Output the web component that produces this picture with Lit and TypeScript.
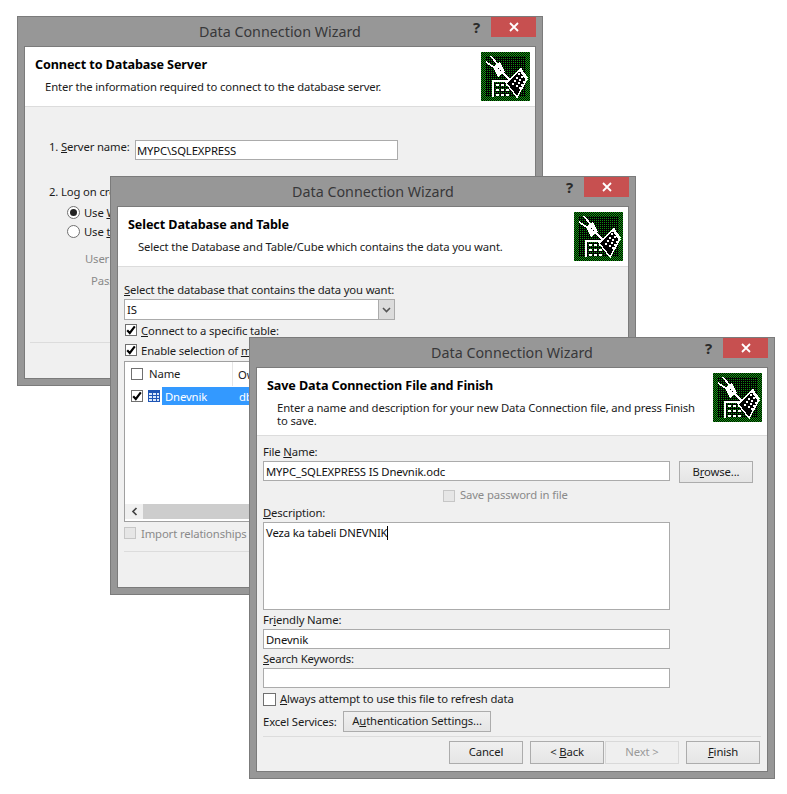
import { LitElement, html, css, svg } from "lit";
import { customElement } from "lit/decorators.js";

const dots: [number, number][] = [];
for (let a = 0; a < 4; a++) for (let b = 0; b < 3; b++) {
  dots.push([31 + a * 1.9 + b * 3.6, 31 - a * 3.2 + b * 2.2]);
}

const icon = () => html`<svg class="icon" viewBox="0 0 49 49" width="49" height="49" shape-rendering="crispEdges">
  <defs>
    <pattern id="chk" width="2" height="2" patternUnits="userSpaceOnUse">
      <rect width="2" height="2" fill="#000"></rect>
      <rect width="1" height="1" fill="#12a012"></rect>
      <rect x="1" y="1" width="1" height="1" fill="#12a012"></rect>
    </pattern>
    <pattern id="dot" width="2" height="2" patternUnits="userSpaceOnUse">
      <rect width="2" height="2" fill="#000"></rect>
      <rect width="1" height="1" fill="#0f8a0f"></rect>
    </pattern>
  </defs>
  <rect width="49" height="49" fill="url(#chk)"></rect>
  <rect x="5" y="4" width="40" height="41" fill="url(#dot)"></rect>
  <g fill="none" stroke="#fff" stroke-width="1.6">
    <path d="M5 10L14 16"></path><path d="M10 4L17 13"></path>
    <path d="M22 21L29 28" stroke-width="1.8"></path>
  </g>
  <path d="M12 15L19 10L24 20L17 25Z" fill="#fff"></path>
  <rect x="17" y="16" width="1" height="1" fill="#000"></rect>
  <rect x="19" y="18" width="1" height="1" fill="#000"></rect>
  <path d="M11 28H27V30H13V45H11Z" fill="#fff"></path>
  ${[32, 37, 42].map((y) => [15, 20, 25].map((x) => svg`<rect x=${x} y=${y} width="3" height="2" fill="#fff"></rect>`))}
  <path d="M40 17L46 27L36 45L25 31Z" fill="#000" stroke="#fff" stroke-width="1.4"></path>
  <path d="M36 20L40 16L47 26L44 27L39.5 20Z" fill="#fff"></path>
  ${dots.map(([x, y]) => svg`<rect x=${x} y=${y} width="2" height="2" fill="#fff"></rect>`)}
</svg>`;

const tick = () => html`<svg class="tick" viewBox="0 0 12 12" width="12" height="12"><path d="M2.2 6.2L4.8 9L9.8 2.4" fill="none" stroke="#000" stroke-width="2.1"></path></svg>`;

const shell = (cls: string, heading: string, sub: unknown, body: unknown) => html`
  <section class="win ${cls}">
    <header class="bar">
      <span class="title">Data Connection Wizard</span>
      <span class="help">?</span>
      <span class="close"><svg viewBox="0 0 10 10" width="10" height="10"><path d="M1 1L9 9M9 1L1 9" stroke="#fff" stroke-width="1.8"></path></svg></span>
    </header>
    <div class="client">
      <div class="head">
        <div class="head-text">
          <h2>${heading}</h2>
          <p>${sub}</p>
        </div>
        ${icon()}
      </div>
      <div class="body">${body}</div>
    </div>
  </section>`;

@customElement("app-root")
export class AppRoot extends LitElement {
  static styles = css`
    :host { display: block; position: relative; width: 787px; height: 794px; background: #fff; overflow: hidden;
      font: 11.3px/13px "Noto Sans", sans-serif; color: #1c1c1c; letter-spacing: -0.14px; }
    .win { position: absolute; box-sizing: border-box; width: 526px; background: #979797; border: 1px solid #7b7b7b;
      padding: 0 6px 6px; display: flex; flex-direction: column; }
    .w1 { left: 17px; top: 16px; height: 370px; }
    .w2 { left: 110px; top: 176px; height: 419px; }
    .w3 { left: 249px; top: 337px; height: 442px; }
    .bar { height: 29px; flex: none; position: relative; display: flex; justify-content: center; align-items: center; box-sizing: border-box; }
    .title { font-size: 14.3px; line-height: 20px; color: #38383a; letter-spacing: 0; }
    .help { position: absolute; right: 56px; top: 0; font: bold 15px/20px "Noto Sans", sans-serif; color: #2b2b2b; }
    .close { position: absolute; right: 0; top: 0; width: 45px; height: 20px; background: #c75050; display: flex; align-items: center; justify-content: center; }
    .client { flex: 1; min-height: 0; border: 1px solid #7b7b7b; background: #f0f0f0; display: flex; flex-direction: column; }
    .head { background: #fff; border-bottom: 1px solid #dcdcdc; display: flex; justify-content: space-between; padding: 5px 5px 5px 10px; box-sizing: border-box; min-height: 60px; flex: none; }
    .w3 .head { min-height: 68px; }
    .head-text { flex: 1; min-width: 0; }
    h2 { margin: 6px 0 0; font-size: 12.6px; line-height: 13px; font-weight: 700; color: #000; letter-spacing: -0.1px; }
    .head p { margin: 9px 0 0 10px; width: 430px; color: #1c1c1c; }
    .icon { display: block; flex: none; }
    .body { flex: 1; min-height: 0; display: flex; flex-direction: column; align-items: flex-start; }
    .field { box-sizing: border-box; background: #fff; border: 1px solid #ababab; height: 20px; padding: 0 1px; line-height: 19px; color: #111; white-space: nowrap; }
    .box { box-sizing: border-box; width: 12px; height: 12px; background: #fff; border: 1px solid #707070; flex: none; display: block; position: relative; }
    .tick { position: absolute; left: -1px; top: -1px; }
    .box.off { background: #e6e6e6; border-color: #c6c6c6; }
    .chk { display: flex; align-items: center; gap: 5px; white-space: nowrap; }
    .dim { color: #8a8a8a; }
    .rule { height: 1px; background: #dcdcdc; align-self: stretch; }
    .btn { box-sizing: border-box; height: 22px; padding-bottom: 2px; border: 1px solid #acacac; background: linear-gradient(#f0f0f0, #e5e5e5); display: flex; align-items: center; justify-content: center; color: #1c1c1c; flex: none; white-space: nowrap; }
    .btn.off { border-color: #d9d9d9; background: #efefef; color: #9a9a9a; }

    /* first window */
    .w1 .body { padding: 33px 0 0 24px; }
    .srv { display: flex; align-items: flex-start; }
    .srv span { width: 86px; white-space: nowrap; }
    .srv .field { width: 263px; }
    .log { margin-top: 25px; white-space: nowrap; }
    .radio { margin: 8px 0 0 18px; display: flex; gap: 4px; align-items: center; white-space: nowrap; }
    .radio + .radio { margin-top: 6px; }
    .ring { box-sizing: border-box; width: 13px; height: 13px; border-radius: 50%; border: 1px solid #707070; background: #fff; display: flex; align-items: center; justify-content: center; }
    .ring i { width: 7px; height: 7px; border-radius: 50%; background: #222; }
    .sub1 { margin: 14px 0 0 36px; color: #8a8a8a; white-space: nowrap; }
    .sub2 { margin: 9px 0 0 42px; color: #8a8a8a; white-space: nowrap; }
    .w1 .rule { margin: 55px 5px 0 -19px; }

    /* second window */
    .w2 .body { padding: 16px 6px 0; }
    .combo { width: 271px; height: 21px; display: flex; margin-top: 3px; padding: 0 0 0 2px; }
    .combo b { font-weight: 400; flex: 1; line-height: 19px; }
    .arrow { width: 15px; background: #dcdcdc; border-left: 1px solid #ababab; display: flex; align-items: center; justify-content: center; }
    .w2 .chk { margin: 4px 0 0 1px; height: 12px; gap: 4px; }
    .w2 .chk.c2 { margin-top: 8px; }
    .table { box-sizing: border-box; align-self: stretch; height: 161px; margin-top: 5px; border: 1px solid #a0a0a0; background: #fff; display: flex; flex-direction: column; }
    .thead { height: 24px; display: flex; align-items: center; padding-left: 6px; flex: none; }
    .thead .n { margin-left: 6px; width: 83px; height: 24px; line-height: 24px; border-right: 1px solid #e5e5e5; }
    .thead .o { margin-left: 5px; }
    .trow { height: 20px; display: flex; align-items: center; padding-left: 6px; flex: none; }
    .cell-i { margin: 0 2px 0 5px; display: block; }
    .sel { flex: 1; height: 18px; background: #3399ff; color: #fff; display: flex; align-items: center; padding-left: 3px; }
    .sel span:first-child { width: 74px; }
    .scroll { margin-top: auto; margin-bottom: 2px; height: 15px; background: #f0f0f0; display: flex; flex: none; }
    .scroll .ar { width: 18px; display: flex; align-items: center; justify-content: center; }
    .scroll .th { flex: 1; background: #cdcdcd; }
    .w2 .chk.imp { margin: 5px 0 0; gap: 5px; }
    .w2 .rule { margin-top: 12px; }

    /* third window */
    .w3 .body { padding: 10px 6px 0; }
    .w3 .field { width: 407px; padding: 0 2px; }
    .w3 .lbl { display: block; line-height: 11px; margin-bottom: 2px; }
    .w3 .chk span:last-child { padding-bottom: 2px; }
    .filerow { display: flex; gap: 9px; align-items: flex-start; margin-top: 2px; }
    .filerow .btn { width: 74px; }
    .w3 .pw { margin: 6px 0 0 180px; height: 13px; }
    .w3 .l2 { margin-top: 5px; }
    .w3 .area { height: 88px; margin-top: 2px; padding-top: 2px; line-height: 16px; white-space: normal; }
    .caret { display: inline-block; width: 1px; height: 14px; background: #000; vertical-align: -3px; }
    .w3 .l3 { margin-top: 4px; }
    .w3 .l4 { margin-top: 4px; }
    .mt2 { margin-top: 2px; }
    .w3 .always { margin-top: 5px; height: 13px; gap: 4px; }
    .w3 .always .box { width: 13px; height: 13px; }
    .svc { margin-top: 5px; display: flex; align-items: center; gap: 9px; white-space: nowrap; }
    .svc > span { width: 71px; }
    .svc .btn { width: 148px; height: 21px; }
    .w3 .rule { margin: 4px 0 0; }
    .foot { display: flex; align-self: stretch; justify-content: flex-end; margin-top: 4px; padding-right: 1px; }
    .foot .btn { width: 74px; height: 23px; }
    .foot .btn.b1 { margin-right: 7px; }
    .foot .btn.b2 { margin-left: 1px; }
    .foot .btn.b3 { margin-left: 7px; }
  `;

  render() {
    const w1 = html`
      <div class="srv"><span>1. <u>S</u>erver name:</span><div class="field">MYPC\\SQLEXPRESS</div></div>
      <div class="log">2. Log on credentials</div>
      <div class="radio"><span class="ring"><i></i></span><span>Use <u>W</u>indows Authentication</span></div>
      <div class="radio"><span class="ring"></span><span>Use <u>t</u>he following User Name and Password</span></div>
      <div class="sub1">User Name:</div>
      <div class="sub2">Password:</div>
      <div class="rule"></div>`;

    const w2 = html`
      <div><u>S</u>elect the database that contains the data you want:</div>
      <div class="field combo"><b>IS</b><span class="arrow"><svg viewBox="0 0 9 6" width="9" height="6"><path d="M1 1L4.5 4.5L8 1" fill="none" stroke="#555" stroke-width="1.6"></path></svg></span></div>
      <div class="chk"><span class="box">${tick()}</span><span><u>C</u>onnect to a specific table:</span></div>
      <div class="chk c2"><span class="box">${tick()}</span><span>Enable selection of <u>m</u>ultiple tables</span></div>
      <div class="table">
        <div class="thead"><span class="box"></span><span class="n">Name</span><span class="o">Owner</span></div>
        <div class="trow"><span class="box">${tick()}</span>
          <svg class="cell-i" viewBox="0 0 12 12" width="12" height="12" shape-rendering="crispEdges"><rect x="0.5" y="0.5" width="11" height="11" fill="#dbe8fa" stroke="#1f55b5"></rect><rect x="1" y="1" width="10" height="2" fill="#1f55b5"></rect><path d="M0 5.5H12M0 8.5H12M4.5 3V12M8 3V12" stroke="#1f55b5"></path></svg>
          <div class="sel"><span>Dnevnik</span><span>dbo</span></div></div>
        <div class="scroll"><span class="ar"><svg viewBox="0 0 7 9" width="7" height="9"><path d="M5.5 1L2 4.5L5.5 8" fill="none" stroke="#444" stroke-width="1.7"></path></svg></span><span class="th"></span></div>
      </div>
      <div class="chk imp dim"><span class="box off"></span><span>Import relationships between selected tables</span></div>
      <div class="rule"></div>`;

    const w3 = html`
      <span class="lbl">File <u>N</u>ame:</span>
      <div class="filerow"><div class="field">MYPC_SQLEXPRESS IS Dnevnik.odc</div><div class="btn"><span>B<u>r</u>owse...</span></div></div>
      <div class="chk pw dim"><span class="box off"></span><span>Save password in file</span></div>
      <span class="lbl l2"><u>D</u>escription:</span>
      <div class="field area">Veza ka tabeli DNEVNIK<span class="caret"></span></div>
      <span class="lbl l3">Fr<u>i</u>endly Name:</span>
      <div class="field mt2">Dnevnik</div>
      <span class="lbl l4"><u>S</u>earch Keywords:</span>
      <div class="field mt2"></div>
      <div class="chk always"><span class="box"></span><span><u>A</u>lways attempt to use this file to refresh data</span></div>
      <div class="svc"><span>Excel Services:</span><div class="btn"><span>A<u>u</u>thentication Settings...</span></div></div>
      <div class="rule"></div>
      <div class="foot">
        <div class="btn b1"><span>Cancel</span></div>
        <div class="btn"><span>&lt; <u>B</u>ack</span></div>
        <div class="btn off b2"><span>Next &gt;</span></div>
        <div class="btn b3"><span><u>F</u>inish</span></div>
      </div>`;

    return html`
      ${shell("w1", "Connect to Database Server", "Enter the information required to connect to the database server.", w1)}
      ${shell("w2", "Select Database and Table", "Select the Database and Table/Cube which contains the data you want.", w2)}
      ${shell("w3", "Save Data Connection File and Finish", html`Enter a name and description for your new Data Connection file, and press Finish to save.`, w3)}
    `;
  }
}
